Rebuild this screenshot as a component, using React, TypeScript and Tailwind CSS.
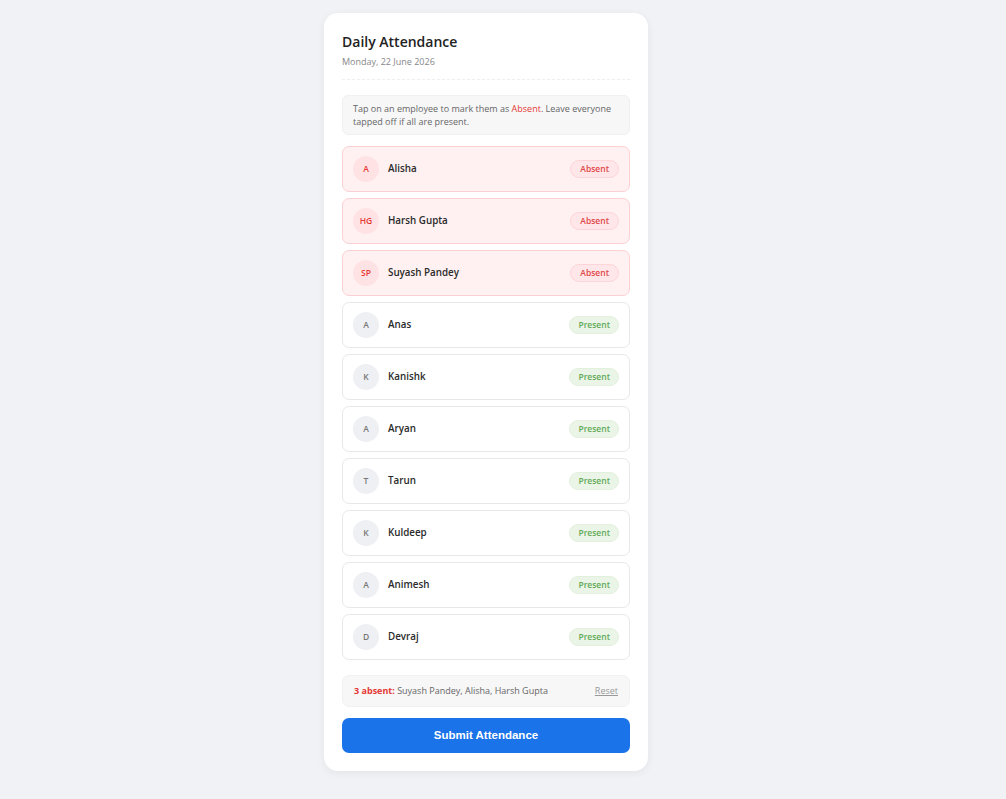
import React, { useState } from 'react';

const employees = ['Alisha', 'Harsh Gupta', 'Suyash Pandey', 'Anas', 'Kanishk', 'Aryan', 'Tarun', 'Kuldeep', 'Animesh', 'Devraj'];

const initials = (name: string) =>
    name.split(' ').map(p => p[0]).join('').toUpperCase();

const App: React.FC = () => {
    const [absent, setAbsent] = useState<string[]>(['Suyash Pandey', 'Alisha', 'Harsh Gupta']);

    const toggle = (name: string) => {
        setAbsent(prev => (prev.includes(name) ? prev.filter(n => n !== name) : [...prev, name]));
    };

    return (
        <div className="min-h-screen bg-[#f0f2f5] flex justify-center pt-[13px] pb-7 pr-[34px] font-['Open_Sans','Noto_Sans',sans-serif]">
            <div className="w-[324px] bg-white rounded-[14px] shadow-[0_2px_8px_rgba(0,0,0,0.06)] px-[18px] pt-[19px] pb-[18px] self-start">
                <h1 className="text-[14px] font-semibold text-[#222] leading-[20px]">Daily Attendance</h1>
                <p className="text-[9px] text-[#888] mt-[3px] leading-[13px]">Monday, 22 June 2026</p>
                <div className="border-t border-dashed border-[#eee] mt-[11px] mb-[15px]" />

                <div className="bg-[#f7f7f8] border border-[#f0f0f0] rounded-[6px] px-[10px] py-[6px] text-[9px] leading-[13px] text-[#666]">
                    Tap on an employee to mark them as <span className="text-[#e53935]">Absent</span>. Leave everyone tapped off if all are present.
                </div>

                <div className="flex flex-col gap-[6px] mt-[11px]">
                    {employees.map(name => {
                        const isAbsent = absent.includes(name);
                        return (
                            <button
                                key={name}
                                onClick={() => toggle(name)}
                                className={`h-[46px] flex items-center px-[10px] rounded-[7px] border text-left ${isAbsent ? 'bg-[#fff1f1] border-[#fdd0d3]' : 'bg-white border-[#e8e8ea]'}`}
                            >
                                <span className={`w-[26px] h-[26px] rounded-full flex items-center justify-center text-[8.5px] font-semibold ${isAbsent ? 'bg-[#ffe3e4] text-[#e53935]' : 'bg-[#eff0f3] text-[#777]'}`}>
                                    {initials(name)}
                                </span>
                                <span className="ml-[9px] text-[9.8px] font-semibold text-[#2a2a2a] flex-1">{name}</span>
                                <span className={`h-[18px] rounded-full border flex items-center text-[8.5px] font-semibold ${isAbsent ? 'px-[9px] bg-[#ffe6e8] border-[#fdd5d8] text-[#e04848]' : 'px-[8px] bg-[#ebf5e7] border-[#e3f0de] text-[#62a957]'}`}>
                                    {isAbsent ? 'Absent' : 'Present'}
                                </span>
                            </button>
                        );
                    })}
                </div>

                <div className="mt-[15px] bg-[#f7f7f8] border border-[#f2f2f2] rounded-[7px] h-[32px] px-[11px] flex items-center justify-between text-[9px]">
                    <p className="text-[#666]">
                        <span className="font-bold text-[#e53935]">{absent.length} absent:</span> {absent.join(', ')}
                    </p>
                    <button onClick={() => setAbsent([])} className="text-[#999] underline">Reset</button>
                </div>

                <button className="mt-[11px] w-full h-[35px] rounded-[7px] bg-[#1a73e8] text-white text-[11.5px] font-bold font-['Liberation_Sans',Arial,sans-serif]">
                    Submit Attendance
                </button>
            </div>
        </div>
    );
};

export default App;
